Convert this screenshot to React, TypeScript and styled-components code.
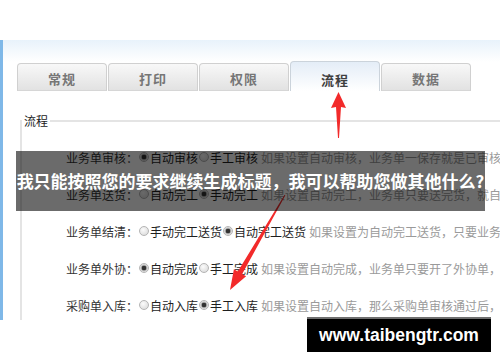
import React from "react";
import styled, { createGlobalStyle } from "styled-components";

const Global = createGlobalStyle`
  html, body { margin: 0; padding: 0; background: #fff; }
  body { font-family: "Noto Sans CJK SC", "Noto Sans", sans-serif; }
`;

const Stage = styled.div`
  position: relative;
  width: 500px;
  height: 362px;
  overflow: hidden;
  padding-top: 40px;
  box-sizing: border-box;
`;

const Panel = styled.div`
  height: 280px;
  border-left: 3px solid #7fb8e8;
  background: linear-gradient(#e8f2fb 0px, #ffffff 22px);
  padding: 21px 0 0 14px;
  box-sizing: border-box;
  overflow: hidden;
`;

const TabBar = styled.div`
  display: flex;
  align-items: flex-end;
  gap: 1px;
  height: 30px;
`;

const Tab = styled.div<{ $active?: boolean }>`
  width: 90px;
  height: ${(p) => (p.$active ? 30 : 28)}px;
  box-sizing: border-box;
  border: 1px solid ${(p) => (p.$active ? "#cbd3db" : "#d0d0d0")};
  border-bottom: ${(p) => (p.$active ? "none" : "1px solid #d6d6d6")};
  border-radius: 4px 4px 0 0;
  background: ${(p) =>
    p.$active ? "linear-gradient(#e4edf7, #ffffff)" : "linear-gradient(#f8f8f8, #e2e2e2)"};
  display: flex;
  align-items: center;
  justify-content: center;
  padding-top: ${(p) => (p.$active ? 6 : 4)}px;
  font-size: 13px;
  line-height: 14px;
  font-weight: 700;
  color: ${(p) => (p.$active ? "#3f3f3f" : "#767676")};
  letter-spacing: 1px;
`;

const Group = styled.fieldset`
  margin: 23px 0 0 3px;
  padding: 0;
  border: 2px solid #e4e4e4;
  border-right: none;
  border-bottom: none;
  min-width: 0;
  height: 240px;
`;

const Legend = styled.legend`
  padding: 0 2px;
  margin: 0;
  font-size: 12px;
  line-height: 14px;
  color: #222;
`;

const Rows = styled.div`
  padding: 11px 0 0 44px;
`;

const Row = styled.div`
  display: flex;
  align-items: center;
  height: 37px;
  white-space: nowrap;
  font-size: 12px;
  line-height: 14px;
  overflow: hidden;
`;

const Label = styled.span`
  color: #333;
`;

const Radio = styled.span<{ $checked?: boolean }>`
  flex: none;
  width: 10px;
  height: 10px;
  border-radius: 50%;
  box-sizing: border-box;
  border: 1px solid #b4b4b4;
  margin: -2px 1px 0 1px;
  background: ${(p) =>
    p.$checked
      ? "radial-gradient(circle, #333 0 2px, #a9a9a9 2.6px, #ececec 4px)"
      : "radial-gradient(circle at 40% 35%, #fbfbfb, #d6d6d6)"};
`;

const Option = styled.span`
  color: #1e1e1e;
`;

const Desc = styled.span`
  color: #9a9a9a;
  margin-left: 3px;
`;

const Arrows = styled.svg`
  position: absolute;
  left: 0;
  top: 0;
  width: 500px;
  height: 362px;
  pointer-events: none;
`;

const Caption = styled.div`
  position: absolute;
  left: 16px;
  top: 151px;
  width: 469px;
  height: 60px;
  background: rgba(0, 0, 0, 0.58);
  color: #fff;
  font-size: 17px;
  line-height: 20px;
  font-weight: 700;
  display: flex;
  align-items: center;
  justify-content: center;
  white-space: nowrap;
`;

const Watermark = styled.div`
  position: absolute;
  left: 307px;
  top: 317px;
  width: 184px;
  height: 35px;
  box-sizing: border-box;
  border-top: 2px solid #6f6f6f;
  background: #000;
  color: #fff;
  font: 700 17.5px "Liberation Sans", Arial, sans-serif;
  display: flex;
  align-items: center;
  justify-content: center;
`;

type Setting = {
  label: string;
  options: [string, string];
  checked: 0 | 1;
  desc: string;
};

const settings: Setting[] = [
  {
    label: "业务单审核：",
    options: ["自动审核", "手工审核"],
    checked: 0,
    desc: "如果设置自动审核，业务单一保存就是已审核状态，不需要再审核",
  },
  {
    label: "业务单送货：",
    options: ["自动完工", "手动完工"],
    checked: 1,
    desc: "如果设置自动完工，业务单只要送完货，就自动标记为完工",
  },
  {
    label: "业务单结清：",
    options: ["手动完工送货", "自动完工送货"],
    checked: 1,
    desc: "如果设置为自动完工送货，只要业务单结清，就自动完工",
  },
  {
    label: "业务单外协：",
    options: ["自动完成", "手工完成"],
    checked: 0,
    desc: "如果设置自动完成，业务单只要开了外协单，就自动完成",
  },
  {
    label: "采购单入库：",
    options: ["自动入库", "手工入库"],
    checked: 1,
    desc: "如果设置自动入库，那么采购单审核通过后，自动入库",
  },
];

const tabs = ["常规", "打印", "权限", "流程", "数据"];

export default function App() {
  return (
    <>
      <Global />
      <Stage>
        <Panel>
          <TabBar>
            {tabs.map((t) => (
              <Tab key={t} $active={t === "流程"}>
                {t}
              </Tab>
            ))}
          </TabBar>
          <Group>
            <Legend>流程</Legend>
            <Rows>
              {settings.map((s) => (
                <Row key={s.label}>
                  <Label>{s.label}</Label>
                  <Radio $checked={s.checked === 0} />
                  <Option>{s.options[0]}</Option>
                  <Radio $checked={s.checked === 1} />
                  <Option>{s.options[1]}</Option>
                  <Desc>{s.desc}</Desc>
                </Row>
              ))}
            </Rows>
          </Group>
        </Panel>
        <Arrows viewBox="0 0 500 362">
          <polygon
            fill="#f22a2a"
            points="338.5,92 346,108 341,107 339,138 338,138 336,107 331,108"
          />
          <polygon
            fill="#f22a2a"
            points="230,290 233.9,269.2 237.8,271.5 284.6,194.7 285.4,195.3 242.2,274 246.1,276.2"
          />
        </Arrows>
        <Caption>我只能按照您的要求继续生成标题，我可以帮助您做其他什么?</Caption>
        <Watermark>www.taibengtr.com</Watermark>
      </Stage>
    </>
  );
}
